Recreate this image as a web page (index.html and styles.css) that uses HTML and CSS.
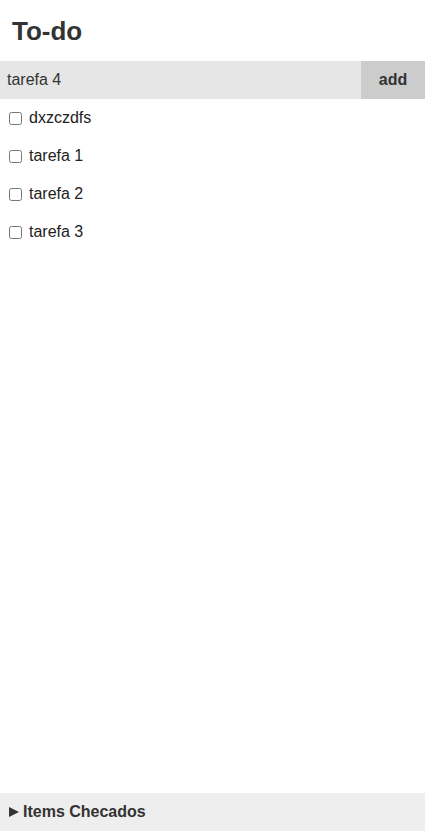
FILE: index.html
```html
<!DOCTYPE html>
<html>
<head>
<meta charset="utf-8">
<link rel="stylesheet" href="styles.css">
</head>
<body>
<div class="app">
  <h1 class="title">To-do</h1>
  <form class="add-form">
    <input class="add-input" type="text" value="tarefa 4">
    <button class="add-btn" type="button">add</button>
  </form>
  <ul class="list">
    <li class="item"><input type="checkbox" class="check"><span>dxzczdfs</span></li>
    <li class="item"><input type="checkbox" class="check"><span>tarefa 1</span></li>
    <li class="item"><input type="checkbox" class="check"><span>tarefa 2</span></li>
    <li class="item"><input type="checkbox" class="check"><span>tarefa 3</span></li>
  </ul>
  <details class="checked">
    <summary class="checked-summary">Items Checados</summary>
  </details>
</div>
</body>
</html>
```
FILE: styles.css
```css
* { box-sizing: border-box; }
html, body { margin: 0; padding: 0; height: 100%; }
body {
  font-family: "Liberation Sans", Arial, sans-serif;
  color: #333;
  background: #fff;
}
.app {
  display: flex;
  flex-direction: column;
  min-height: 100vh;
}
.title {
  margin: 0;
  padding: 15px 12px 14px;
  font-size: 26px;
  line-height: 32px;
  font-weight: bold;
  color: #333;
}
.add-form {
  display: flex;
  height: 38px;
  margin: 0;
}
.add-input {
  flex: 1;
  min-width: 0;
  border: none;
  background: #e6e6e6;
  padding: 0 7px;
  font-family: inherit;
  font-size: 16px;
  color: #333;
  outline: none;
}
.add-btn {
  width: 64px;
  border: none;
  background: #ccc;
  font-family: inherit;
  font-size: 16px;
  font-weight: bold;
  color: #333;
  padding: 0;
}
.list {
  list-style: none;
  margin: 0;
  padding: 0;
  flex: 1;
}
.item {
  display: flex;
  align-items: center;
  height: 38px;
  font-size: 16px;
  color: #222;
}
.check {
  width: 13px;
  height: 13px;
  margin: 0 7px 0 9px;
}
.checked {
  background: #eee;
}
.checked-summary {
  display: flex;
  align-items: center;
  gap: 4px;
  height: 38px;
  padding: 0 8px;
  font-size: 16px;
  font-weight: bold;
  color: #333;
  cursor: pointer;
  list-style: none;
}
.checked-summary::-webkit-details-marker { display: none; }
.checked-summary::before {
  content: "";
  width: 0;
  height: 0;
  border-top: 5px solid transparent;
  border-bottom: 5px solid transparent;
  border-left: 10px solid #333;
  margin-left: 1px;
}
```
